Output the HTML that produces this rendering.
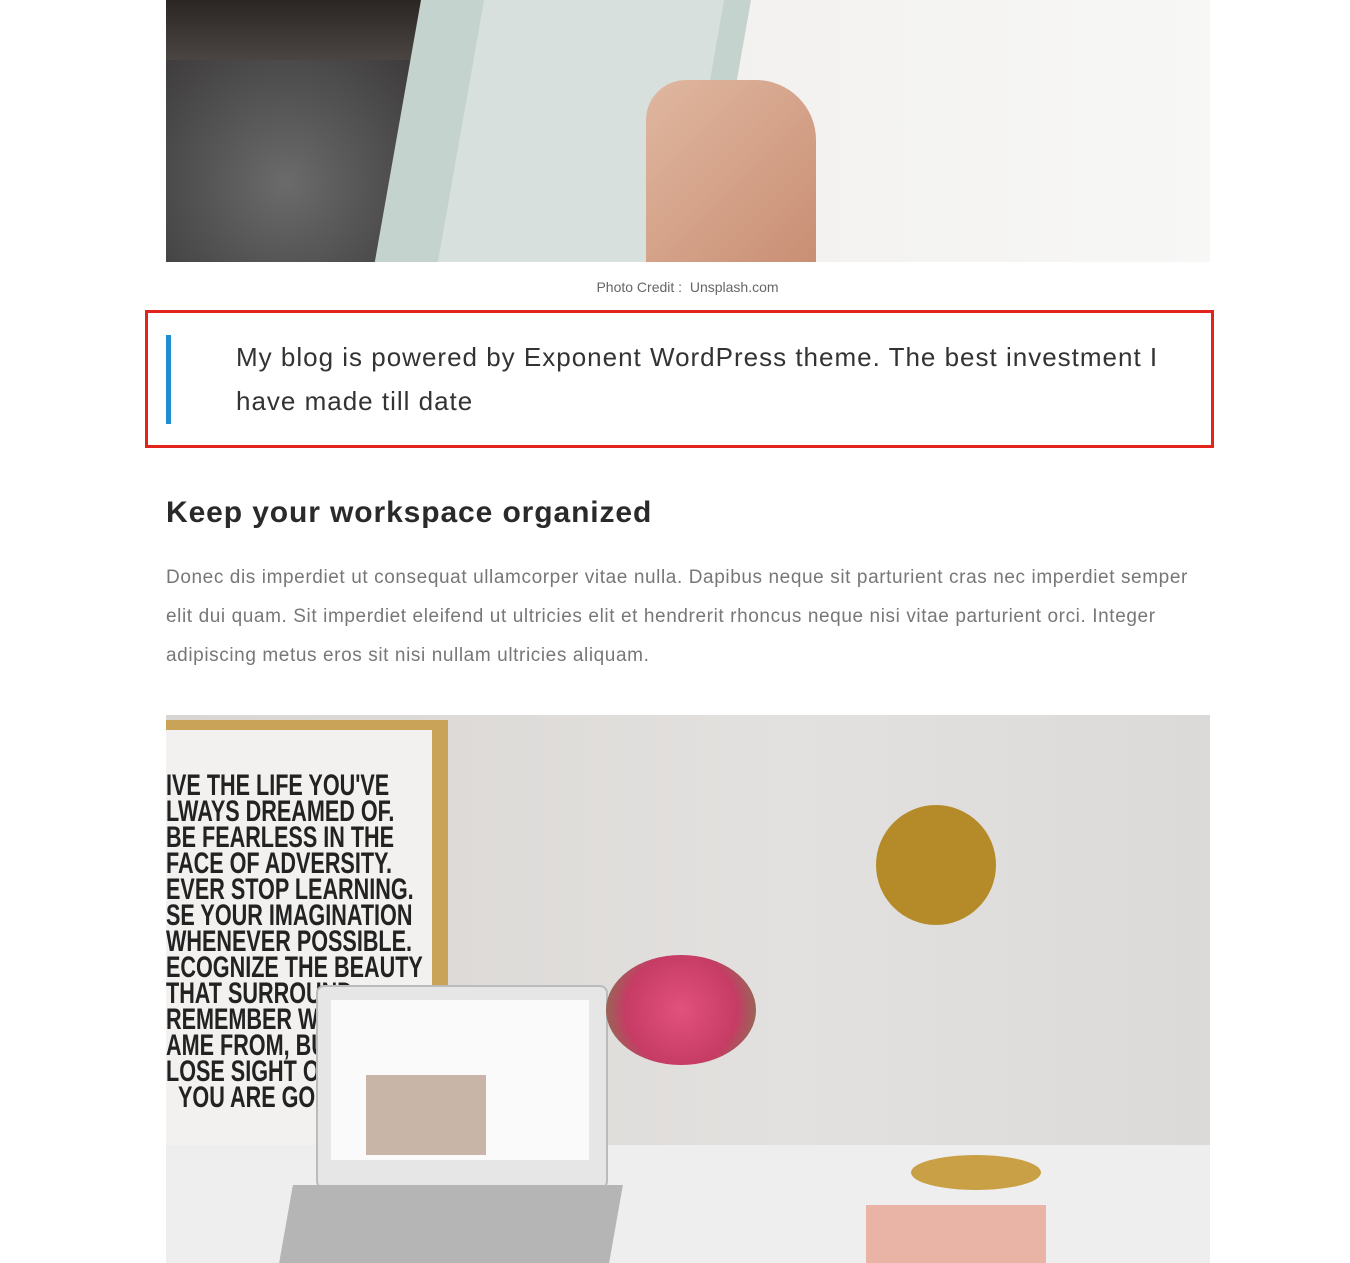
<!DOCTYPE html>
<html><head><meta charset="utf-8"><style>
body{margin:0;background:#fff;width:1350px;height:1263px;overflow:hidden;position:relative;font-family:"Liberation Sans",sans-serif}
.a{position:absolute}
</style></head><body>
<div class="a" style="left:166px;top:0;width:1044px;height:262px;background:linear-gradient(90deg,#ece9e6 0%,#f3f2f0 60%,#f7f7f6 100%);overflow:hidden">
  <div class="a" style="left:0;top:0;width:300px;height:262px;background:radial-gradient(ellipse at 40% 70%,#6b6b6b,#3c3a3a 70%,#2a2828)"></div>
  <div class="a" style="left:0;top:0;width:260px;height:60px;background:linear-gradient(180deg,#2b2624,#4a4542)"></div>
  <div class="a" style="left:255px;top:0;width:330px;height:262px;background:#c5d3cf;transform:skewX(-10deg);transform-origin:top"></div>
  <div class="a" style="left:295px;top:0;width:240px;height:262px;background:#d7e0dc;transform:skewX(-10deg)"></div>
  <div class="a" style="left:480px;top:80px;width:170px;height:182px;background:linear-gradient(135deg,#e0b7a0,#c98f74);border-radius:40px 60px 0 0"></div>
</div>
<div class="a" style="left:0;width:1375px;top:279px;text-align:center;font-size:14px;color:#666">Photo Credit :&nbsp; Unsplash.com</div>
<div class="a" style="left:145px;top:310px;width:1063px;height:132px;border:3px solid #e3241c"></div>
<div class="a" style="left:166px;top:335px;width:5px;height:89px;background:#1e8ed1"></div>
<div class="a" style="left:236px;top:335px;width:940px;font-size:26px;letter-spacing:1px;line-height:44px;color:#333">My blog is powered by Exponent WordPress theme. The best investment I have made till date</div>
<div class="a" style="left:166px;top:496px;font-size:30px;letter-spacing:0.9px;font-weight:bold;color:#2a2a2a">Keep your workspace organized</div>
<div class="a" style="left:166px;top:558px;width:1030px;font-size:19px;letter-spacing:0.6px;line-height:39px;color:#777">Donec dis imperdiet ut consequat ullamcorper vitae nulla. Dapibus neque sit parturient cras nec imperdiet semper elit dui quam. Sit imperdiet eleifend ut ultricies elit et hendrerit rhoncus neque nisi vitae parturient orci. Integer adipiscing metus eros sit nisi nullam ultricies aliquam.</div>
<div class="a" style="left:166px;top:715px;width:1044px;height:548px;background:linear-gradient(90deg,#d8d5d2,#e3e1df 60%,#dcdad8);overflow:hidden">
  <div class="a" style="left:0;top:5px;width:282px;height:455px;background:#c9a458"></div>
  <div class="a" style="left:0;top:15px;width:266px;height:435px;background:#f2f1ef"></div>
  <div class="a" style="left:0;top:58px;white-space:nowrap;font:bold 30px/26px 'Liberation Sans Narrow','Liberation Sans',sans-serif;color:#222;transform:scaleX(0.72);transform-origin:left">IVE THE LIFE YOU'VE<br>LWAYS DREAMED OF.<br>BE FEARLESS IN THE<br>FACE OF ADVERSITY.<br>EVER STOP LEARNING.<br>SE YOUR IMAGINATION<br>WHENEVER POSSIBLE.<br>ECOGNIZE THE BEAUTY<br>THAT SURROUND<br>REMEMBER WHI<br>AME FROM, BU<br>LOSE SIGHT OF<br>&nbsp;&nbsp;YOU ARE GO</div>
  <div class="a" style="left:0;top:430px;width:1044px;height:118px;background:#eeeeee"></div>
  <div class="a" style="left:150px;top:270px;width:288px;height:200px;background:#e6e6e6;border:2px solid #bbb;border-radius:8px"></div>
  <div class="a" style="left:165px;top:285px;width:258px;height:160px;background:#fafafa"></div>
  <div class="a" style="left:200px;top:360px;width:120px;height:80px;background:#c9b5a8"></div>
  <div class="a" style="left:120px;top:470px;width:330px;height:78px;background:#b5b5b5;transform:skewX(-10deg)"></div>
  <div class="a" style="left:440px;top:240px;width:150px;height:110px;background:radial-gradient(circle,#e2527c,#c63c64 60%,#6f8a4c);border-radius:50%"></div>
  <div class="a" style="left:710px;top:90px;width:120px;height:120px;background:#b58b2a;border-radius:50%"></div>
  <div class="a" style="left:745px;top:440px;width:130px;height:35px;background:#c9a045;border-radius:50%"></div>
  <div class="a" style="left:700px;top:490px;width:180px;height:58px;background:#e9b3a5"></div>
</div>
</body></html>
